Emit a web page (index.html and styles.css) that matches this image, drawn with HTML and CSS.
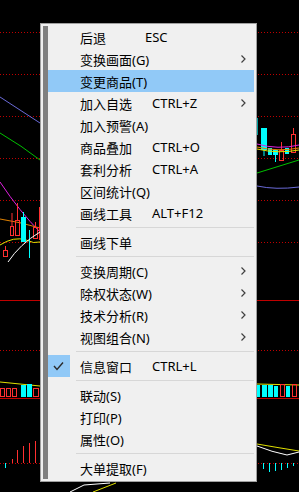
FILE: index.html
```html
<!DOCTYPE html>
<html lang="zh-CN">
  <head>
    <meta charset="UTF-8" />
    <title>右键菜单</title>
    <link rel="stylesheet" href="styles.css">
  </head>
  <body>
    <div class="screen">
      <svg class="chart" width="299" height="492" viewBox="0 0 299 492">
        <g stroke="#c00000" stroke-width="1" stroke-dasharray="1 2" fill="none">
          <line x1="0" y1="32.5" x2="299" y2="32.5" />
          <line x1="0" y1="74.5" x2="299" y2="74.5" />
          <line x1="0" y1="116.5" x2="299" y2="116.5" />
          <line x1="0" y1="158.5" x2="299" y2="158.5" />
          <line x1="0" y1="200.5" x2="299" y2="200.5" />
          <line x1="0" y1="242.5" x2="299" y2="242.5" />
          <line x1="0" y1="350.5" x2="299" y2="350.5" />
          <line x1="0" y1="463.5" x2="299" y2="463.5" />
        </g>
        <g stroke="#c00000" stroke-width="1" fill="none">
          <line x1="0" y1="300.5" x2="299" y2="300.5" />
          <line x1="0" y1="398.5" x2="299" y2="398.5" />
        </g>

        <!-- left part of the chart -->
        <path d="M0 97 L40 123" stroke="#6a6ad8" fill="none" />
        <path d="M0 133 Q22 146 40 160" stroke="#00c000" fill="none" />
        <path d="M0 182 Q20 212 40 232" stroke="#e020e0" fill="none" />
        <path d="M0 219 Q20 222 40 228" stroke="#e08000" fill="none" />
        <path d="M0 245 Q14 236 26 240 Q34 244 40 242" stroke="#e0e000" fill="none" />
        <g stroke="#ff3030" fill="none">
          <rect x="3.5" y="250.5" width="4" height="6" />
          <line x1="5.5" y1="246" x2="5.5" y2="250" />
          <rect x="10.5" y="226.5" width="3" height="9" />
          <line x1="12" y1="213" x2="12" y2="226" />
          <rect x="15.5" y="220.5" width="4" height="15" />
          <line x1="17.5" y1="203" x2="17.5" y2="220" />
          <rect x="33.5" y="227.5" width="4" height="11" />
          <line x1="35.5" y1="222" x2="35.5" y2="227" />
          <line x1="39.5" y1="207" x2="39.5" y2="240" />
        </g>
        <rect x="21" y="217" width="5" height="25" fill="#00ffff" />
        <line x1="23.5" y1="212" x2="23.5" y2="217" stroke="#00ffff" />
        <line x1="29.5" y1="230" x2="29.5" y2="258" stroke="#00ffff" />
        <path d="M8 262 Q20 244 40 232" stroke="#ffffff" fill="none" />

        <!-- left volume -->
        <path d="M0 382 L40 386" stroke="#e0e000" fill="none" />
        <g stroke="#ff3030" fill="none">
          <rect x="0.5" y="388.5" width="4" height="8" />
          <rect x="6.5" y="388.5" width="4" height="8" />
          <rect x="12.5" y="388.5" width="4" height="8" />
          <rect x="33.5" y="388.5" width="5" height="8" />
          <line x1="12.5" y1="459" x2="12.5" y2="463" />
          <line x1="17.5" y1="450" x2="17.5" y2="463" />
          <line x1="23.5" y1="446" x2="23.5" y2="463" />
          <line x1="29.5" y1="443" x2="29.5" y2="463" />
          <line x1="35.5" y1="441" x2="35.5" y2="463" />
        </g>
        <rect x="21" y="385" width="5" height="12" fill="#00ffff" />
        <rect x="27" y="384" width="5" height="13" fill="#00ffff" />
        <line x1="5.5" y1="463" x2="5.5" y2="468" stroke="#00ffff" />

        <!-- right part of the chart -->
        <line x1="257.5" y1="118" x2="257.5" y2="135" stroke="#00a0a0" />
        <rect x="261" y="128" width="6" height="22" fill="#00ffff" />
        <line x1="264" y1="150" x2="264" y2="156" stroke="#00ffff" />
        <rect x="268" y="148" width="4" height="7" fill="#00ffff" />
        <rect x="273" y="150" width="5" height="5" fill="#00ffff" />
        <line x1="275.5" y1="155" x2="275.5" y2="162" stroke="#00ffff" />
        <rect x="285" y="148" width="4" height="6" fill="#00ffff" />
        <g stroke="#ff3030" fill="none">
          <rect x="279.5" y="150.5" width="4" height="10" />
          <line x1="281.5" y1="142" x2="281.5" y2="150" />
          <rect x="291.5" y="134.5" width="4" height="18" />
          <line x1="293.5" y1="128" x2="293.5" y2="134" />
        </g>
        <path d="M257 144 Q278 150 299 145" stroke="#e020e0" fill="none" />
        <path d="M257 147 Q278 152 299 148" stroke="#e08000" fill="none" />
        <path d="M257 149 Q278 154 299 150" stroke="#e0e000" fill="none" />
        <path d="M257 173 L299 160" stroke="#00c000" fill="none" />
        <path d="M257 186 Q276 190 299 187" stroke="#6a6ad8" fill="none" />

        <!-- right volume -->
        <path d="M257 384 L299 385" stroke="#e0e000" fill="none" />
        <rect x="257" y="385" width="3" height="12" fill="#00ffff" />
        <rect x="262" y="385" width="5" height="12" fill="#00ffff" />
        <rect x="268" y="385" width="5" height="12" fill="#00ffff" />
        <rect x="274" y="386" width="4" height="11" fill="#00ffff" />
        <rect x="286" y="386" width="4" height="11" fill="#00ffff" />
        <g stroke="#ff3030" fill="none">
          <rect x="280.5" y="384.5" width="4" height="12" />
          <rect x="292.5" y="384.5" width="4" height="12" />
        </g>
        <path d="M257 444 Q280 448 299 451" stroke="#e0e000" fill="none" />
        <path d="M257 446 Q272 452 287 455 L299 452" stroke="#ffffff" fill="none" />
        <g stroke="#00ffff">
          <line x1="263.5" y1="463" x2="263.5" y2="469" />
          <line x1="269.5" y1="463" x2="269.5" y2="472" />
          <line x1="275.5" y1="463" x2="275.5" y2="471" />
          <line x1="281.5" y1="463" x2="281.5" y2="470" />
          <line x1="287.5" y1="463" x2="287.5" y2="468" />
          <line x1="293.5" y1="463" x2="293.5" y2="466" />
        </g>

        <!-- under the menu -->
        <path d="M70 492 L84 485 L110 483" stroke="#ffffff" fill="none" />
        <path d="M93 492 L116 483" stroke="#e0e000" fill="none" />
      </svg>

      <div class="menu">
        <div class="menu-stripe"></div>
        <div class="menu-list">
          <div class="item">
            <span class="check"></span>
            <span class="label">后退</span>
            <span class="key key-esc">ESC</span>
          </div>
          <div class="item">
            <span class="check"></span>
            <span class="label">变换画面(G)</span>
            <span class="key"></span>
            <svg class="arrow" width="5" height="8" viewBox="0 0 5 8"><polyline points="0.5,0.5 4,4 0.5,7.5" /></svg>
          </div>
          <div class="item item-active">
            <span class="check"></span>
            <span class="label">变更商品(T)</span>
            <span class="key"></span>
          </div>
          <div class="item">
            <span class="check"></span>
            <span class="label">加入自选</span>
            <span class="key">CTRL+Z</span>
            <svg class="arrow" width="5" height="8" viewBox="0 0 5 8"><polyline points="0.5,0.5 4,4 0.5,7.5" /></svg>
          </div>
          <div class="item">
            <span class="check"></span>
            <span class="label">加入预警(A)</span>
            <span class="key"></span>
          </div>
          <div class="item">
            <span class="check"></span>
            <span class="label">商品叠加</span>
            <span class="key">CTRL+O</span>
          </div>
          <div class="item">
            <span class="check"></span>
            <span class="label">套利分析</span>
            <span class="key">CTRL+A</span>
          </div>
          <div class="item">
            <span class="check"></span>
            <span class="label">区间统计(Q)</span>
            <span class="key"></span>
          </div>
          <div class="item">
            <span class="check"></span>
            <span class="label">画线工具</span>
            <span class="key">ALT+F12</span>
          </div>

          <div class="sep"></div>

          <div class="item">
            <span class="check"></span>
            <span class="label">画线下单</span>
            <span class="key"></span>
          </div>

          <div class="sep"></div>

          <div class="item">
            <span class="check"></span>
            <span class="label">变换周期(C)</span>
            <span class="key"></span>
            <svg class="arrow" width="5" height="8" viewBox="0 0 5 8"><polyline points="0.5,0.5 4,4 0.5,7.5" /></svg>
          </div>
          <div class="item">
            <span class="check"></span>
            <span class="label">除权状态(W)</span>
            <span class="key"></span>
            <svg class="arrow" width="5" height="8" viewBox="0 0 5 8"><polyline points="0.5,0.5 4,4 0.5,7.5" /></svg>
          </div>
          <div class="item">
            <span class="check"></span>
            <span class="label">技术分析(R)</span>
            <span class="key"></span>
            <svg class="arrow" width="5" height="8" viewBox="0 0 5 8"><polyline points="0.5,0.5 4,4 0.5,7.5" /></svg>
          </div>
          <div class="item">
            <span class="check"></span>
            <span class="label">视图组合(N)</span>
            <span class="key"></span>
            <svg class="arrow" width="5" height="8" viewBox="0 0 5 8"><polyline points="0.5,0.5 4,4 0.5,7.5" /></svg>
          </div>

          <div class="sep"></div>

          <div class="item">
            <span class="check check-on">
              <svg width="22" height="22" viewBox="0 0 22 22"><polyline points="6,11 9,14.5 15,7.5" /></svg>
            </span>
            <span class="label">信息窗口</span>
            <span class="key">CTRL+L</span>
          </div>

          <div class="sep"></div>

          <div class="item">
            <span class="check"></span>
            <span class="label">联动(S)</span>
            <span class="key"></span>
          </div>
          <div class="item">
            <span class="check"></span>
            <span class="label">打印(P)</span>
            <span class="key"></span>
          </div>
          <div class="item">
            <span class="check"></span>
            <span class="label">属性(O)</span>
            <span class="key"></span>
          </div>

          <div class="sep"></div>

          <div class="item">
            <span class="check"></span>
            <span class="label">大单提取(F)</span>
            <span class="key"></span>
          </div>
        </div>
      </div>
    </div>
  </body>
</html>
```

FILE: styles.css
```css
body {
  margin: 0;
  background-color: #000;
}
.screen {
  position: relative;
  width: 299px;
  height: 492px;
  overflow: hidden;
  background-color: #000;
}
.chart {
  position: absolute;
  left: 0;
  top: 0;
}
.menu {
  position: absolute;
  left: 40px;
  top: 23px;
  width: 211px;
  display: flex;
  padding: 2px;
  background-color: #f0f0f0;
  border: 1px solid #a0a0a0;
  font-family: "Noto Sans", "Noto Sans CJK SC", sans-serif;
  font-size: 13px;
  color: #000;
}
.menu-stripe {
  width: 5px;
  background-color: #808080;
}
.menu-list {
  flex: 1;
}
.item {
  display: flex;
  align-items: center;
  height: 22px;
  white-space: nowrap;
}
.item-active {
  background-color: #91c9f7;
}
.check {
  width: 22px;
  height: 22px;
  flex: none;
}
.check-on {
  background-color: #91c9f7;
}
.check svg polyline {
  fill: none;
  stroke: #2b2b2b;
  stroke-width: 1.4;
}
.label {
  width: 72px;
  margin-left: 10px;
  flex: none;
}
.key {
  flex: 1;
}
.key-esc {
  margin-left: -7px;
}
.arrow {
  flex: none;
  margin-right: 8px;
}
.arrow polyline {
  fill: none;
  stroke: #404040;
  stroke-width: 1.2;
}
.sep {
  height: 3px;
  margin-left: 28px;
  border-bottom: 1px solid #d7d7d7;
  margin-bottom: 3px;
}
```
